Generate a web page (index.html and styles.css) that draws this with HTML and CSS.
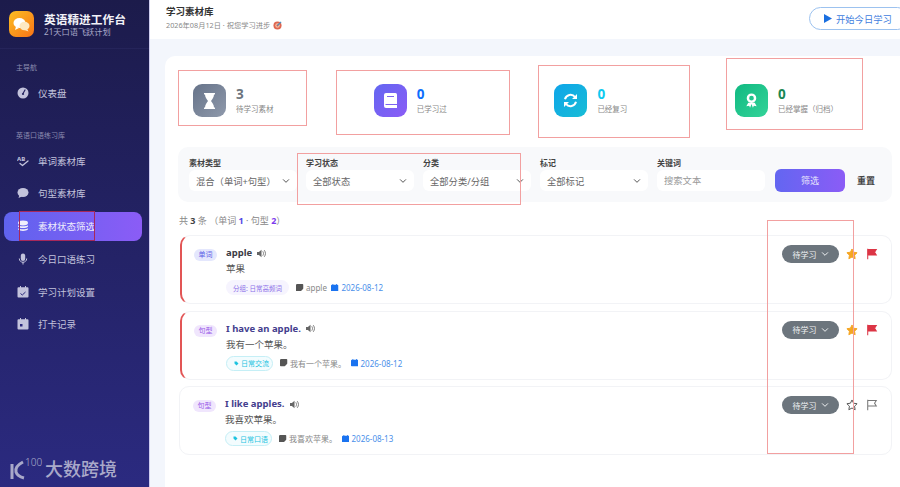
FILE: index.html
```html
<!DOCTYPE html>
<html lang="zh-CN">
<head>
    <meta charset="UTF-8">
    <meta name="viewport" content="width=device-width, initial-scale=1.0">
    <title>学习素材库</title>
    <link rel="stylesheet" href="styles.css">
</head>
<body>
    <svg class="defs" aria-hidden="true">
        <symbol id="i-chevron" viewBox="0 0 12 12"><path d="M2 4l4 4 4-4" fill="none" stroke="currentColor" stroke-width="1.5" stroke-linecap="round" stroke-linejoin="round"/></symbol>
        <symbol id="i-sound" viewBox="0 0 14 12"><path d="M1 4h2.5L7 1v10L3.500 8H1z" fill="currentColor"/><path d="M9 3.500c1 1.500 1 3.500 0 5M11 2c1.800 2.500 1.800 5.500 0 8" fill="none" stroke="currentColor" stroke-width="1.100" stroke-linecap="round"/></symbol>
        <symbol id="i-note" viewBox="0 0 10 10"><path d="M1.500 0h7A1.500 1.500 0 0 1 10 1.500V6L6 10H1.500A1.500 1.500 0 0 1 0 8.500v-7A1.500 1.500 0 0 1 1.500 0z" fill="currentColor"/></symbol>
        <symbol id="i-cal" viewBox="0 0 10 10"><path d="M2 0h1v1h4V0h1v1h.7A1.300 1.300 0 0 1 10 2.300v6.400A1.300 1.300 0 0 1 8.700 10H1.300A1.300 1.300 0 0 1 0 8.700V2.300A1.300 1.300 0 0 1 1.300 1H2z" fill="currentColor"/></symbol>
        <symbol id="i-tag" viewBox="0 0 10 10"><path d="M1 1h4l4 4-4 4-4-4z" fill="currentColor"/></symbol>
        <symbol id="i-star" viewBox="0 0 16 16"><path d="M8 1.300l2.100 4.300 4.700.7-3.400 3.300.8 4.700L8 12l-4.200 2.300.8-4.700L1.200 6.300l4.700-.7z"/></symbol>
        <symbol id="i-flag" viewBox="0 0 14 14"><path d="M2 1v12M2 1.800h10L10 5l2 3.200H2"/></symbol>
    </svg>

    <div class="app">
        <aside class="sidebar">
            <div class="brand">
                <div class="brand-logo">
                    <svg width="17" height="15" viewBox="0 0 17 15"><ellipse cx="6.500" cy="6" rx="6" ry="5" fill="#fff"/><path d="M3 9.500L2 13l4-2z" fill="#fff"/><ellipse cx="11.500" cy="9" rx="5" ry="4.200" fill="#fde9c4"/><path d="M14 12l1.500 2.500-4-1.500z" fill="#fde9c4"/></svg>
                </div>
                <div>
                    <div class="brand-name">英语精进工作台</div>
                    <div class="brand-sub">21天口语飞跃计划</div>
                </div>
            </div>

            <div class="nav-label nav-label-first">主导航</div>
            <a class="nav-item">
                <svg class="nav-icon" viewBox="0 0 12 12"><circle cx="6" cy="6" r="5.500" fill="currentColor"/><path d="M6 6.500L8 3" stroke="#25235f" stroke-width="1.200" stroke-linecap="round"/><circle cx="6" cy="7" r="1.100" fill="#25235f"/></svg>
                仪表盘
            </a>

            <div class="nav-label">英语口语练习库</div>
            <a class="nav-item">
                <svg class="nav-icon" viewBox="0 0 12 12"><text x="0" y="5.500" class="nav-ab">AB</text><path d="M3 8.500l2.500 2L11 6" fill="none" stroke="currentColor" stroke-width="1.300" stroke-linecap="round" stroke-linejoin="round"/></svg>
                单词素材库
            </a>
            <a class="nav-item">
                <svg class="nav-icon" viewBox="0 0 12 12"><ellipse cx="6" cy="5.500" rx="5.500" ry="4.500" fill="currentColor"/><path d="M2.500 8L1.500 11l3.500-1.500z" fill="currentColor"/></svg>
                句型素材库
            </a>
            <a class="nav-item active">
                <svg class="nav-icon" viewBox="0 0 12 12"><ellipse cx="6" cy="3" rx="5" ry="2.400" fill="currentColor"/><path d="M1 5.200c1.500 1.500 8.500 1.500 10 0v1.300c-1.500 2-8.500 2-10 0zM1 8.200c1.500 1.500 8.500 1.500 10 0v1c-1.500 2.300-8.500 2.300-10 0z" fill="currentColor"/></svg>
                素材状态筛选
            </a>
            <a class="nav-item">
                <svg class="nav-icon" viewBox="0 0 12 12"><rect x="3.800" y="0.500" width="4.400" height="7.500" rx="2.200" fill="currentColor"/><path d="M2.300 5.500c0 5 7.400 5 7.400 0M6 9v2.500" fill="none" stroke="currentColor" stroke-width="1"/></svg>
                今日口语练习
            </a>
            <a class="nav-item">
                <svg class="nav-icon" viewBox="0 0 12 12"><path d="M3 0h1v1.200h4V0h1v1.200h1.500A1 1 0 0 1 11.500 2.200v8.300a1 1 0 0 1-1 1h-9a1 1 0 0 1-1-1V2.200a1 1 0 0 1 1-1H3z" fill="currentColor"/><path d="M3.500 7.500l1.800 1.500 3.200-3" fill="none" stroke="#29277a" stroke-width="1"/></svg>
                学习计划设置
            </a>
            <a class="nav-item">
                <svg class="nav-icon" viewBox="0 0 12 12"><path d="M3 0h1v1.200h4V0h1v1.200h1.500A1 1 0 0 1 11.500 2.200v8.300a1 1 0 0 1-1 1h-9a1 1 0 0 1-1-1V2.200a1 1 0 0 1 1-1H3z" fill="currentColor"/><rect x="3" y="6" width="2.500" height="2.500" fill="#2a287c"/></svg>
                打卡记录
            </a>

            <!-- 水印 -->
            <div class="watermark">
                <svg width="16" height="21" viewBox="0 0 16 21"><path d="M3 5v15M14 3C8 6 6 9 7 13c1 3 4 5 8 6" fill="none" stroke="currentColor" stroke-width="3"/></svg>
                <span class="watermark-num">100</span>
                <span class="watermark-name">大数跨境</span>
            </div>
        </aside>

        <main class="main">
            <header class="topbar">
                <div>
                    <h1>学习素材库</h1>
                    <p>2026年08月12日 · 祝您学习进步
                        <svg class="target" viewBox="0 0 10 10"><circle cx="5" cy="5" r="4.500" fill="#e0664f"/><circle cx="5" cy="5" r="2.500" fill="#f2c1a8"/><circle cx="5" cy="5" r="1.100" fill="#d9503c"/><path d="M5 5l4-4" stroke="#4a90c2" stroke-width="1.200"/></svg>
                    </p>
                </div>
                <button class="start-btn" type="button">
                    <svg width="8" height="9" viewBox="0 0 8 9"><path d="M0 0l8 4.500L0 9z" fill="#1a6fe0"/></svg>
                    开始今日学习
                </button>
            </header>

            <section class="panel">
                <div class="stats">
                    <div class="stat">
                        <div class="stat-icon bg-gray">
                            <svg width="13" height="16" viewBox="0 0 13 16"><path d="M1 0h11v1.500h-1c0 3-2 4.700-3 6.500 1 1.800 3 3.500 3 6.500h1V16H1v-1.500h1C2 11.500 4 9.800 5 8 4 6.200 2 4.500 2 1.500H1z" fill="#fff"/></svg>
                        </div>
                        <div><div class="stat-num num-gray">3</div><div class="stat-label">待学习素材</div></div>
                    </div>
                    <div class="stat">
                        <div class="stat-icon bg-purple">
                            <svg width="13" height="15" viewBox="0 0 13 15"><path d="M2 0h9.500A1.500 1.500 0 0 1 13 1.500V15H2a2 2 0 0 1-2-2V2a2 2 0 0 1 2-2z" fill="#fff"/><path d="M3 3.500h7M1.500 11.500H13" stroke="#7c63f0" stroke-width="1.200"/></svg>
                        </div>
                        <div><div class="stat-num num-blue">0</div><div class="stat-label">已学习过</div></div>
                    </div>
                    <div class="stat">
                        <div class="stat-icon bg-cyan">
                            <svg width="15" height="15" viewBox="0 0 15 15"><path d="M2 6.200A5.700 5.700 0 0 1 12 4" fill="none" stroke="#fff" stroke-width="2"/><path d="M14 1v5h-5zM1 14V9h5z" fill="#fff"/><path d="M13 8.800A5.700 5.700 0 0 1 3 11" fill="none" stroke="#fff" stroke-width="2"/></svg>
                        </div>
                        <div><div class="stat-num num-cyan">0</div><div class="stat-label">已经复习</div></div>
                    </div>
                    <div class="stat">
                        <div class="stat-icon bg-green">
                            <svg width="13" height="15" viewBox="0 0 13 16"><circle cx="6.500" cy="5.500" r="3.800" fill="none" stroke="#fff" stroke-width="2.600"/><path d="M3 10.500L1 14l3-.3 1 2 1.500-4 1.500 4 1-2 3 .3-2-3.500z" fill="#fff"/></svg>
                        </div>
                        <div><div class="stat-num num-green">0</div><div class="stat-label">已经掌握（归档）</div></div>
                    </div>
                </div>

                <form class="filters">
                    <div class="field">
                        <label>素材类型</label>
                        <div class="select">混合（单词+句型）<svg class="chev"><use href="#i-chevron"/></svg></div>
                    </div>
                    <div class="field">
                        <label>学习状态</label>
                        <div class="select">全部状态<svg class="chev"><use href="#i-chevron"/></svg></div>
                    </div>
                    <div class="field">
                        <label>分类</label>
                        <div class="select">全部分类/分组<svg class="chev"><use href="#i-chevron"/></svg></div>
                    </div>
                    <div class="field">
                        <label>标记</label>
                        <div class="select">全部标记<svg class="chev"><use href="#i-chevron"/></svg></div>
                    </div>
                    <div class="field">
                        <label>关键词</label>
                        <input class="select" type="text" placeholder="搜索文本">
                    </div>
                    <button class="filter-btn" type="button">筛选</button>
                    <button class="reset-btn" type="button">重置</button>
                </form>

                <div class="count">共 <b>3</b> 条 （单词 <b class="c-word">1</b> · 句型 <b class="c-sent">2</b>）</div>

                <div class="card marked">
                    <span class="badge badge-word">单词</span>
                    <div class="card-body">
                        <div class="card-title">apple <svg class="sound"><use href="#i-sound"/></svg></div>
                        <div class="card-trans">苹果</div>
                        <div class="card-meta">
                            <span class="pill pill-group">分组: 日常高频词</span>
                            <span class="meta"><svg class="meta-icon"><use href="#i-note"/></svg>apple</span>
                            <span class="meta date"><svg class="meta-icon"><use href="#i-cal"/></svg>2026-08-12</span>
                        </div>
                    </div>
                    <div class="card-actions">
                        <span class="status">待学习<svg class="chev"><use href="#i-chevron"/></svg></span>
                        <svg class="star on"><use href="#i-star"/></svg>
                        <svg class="flag on"><use href="#i-flag"/></svg>
                    </div>
                </div>

                <div class="card marked">
                    <span class="badge badge-sent">句型</span>
                    <div class="card-body">
                        <div class="card-title title-sent">I have an apple. <svg class="sound"><use href="#i-sound"/></svg></div>
                        <div class="card-trans">我有一个苹果。</div>
                        <div class="card-meta">
                            <span class="pill pill-cat"><svg class="tag-icon"><use href="#i-tag"/></svg>日常交流</span>
                            <span class="meta"><svg class="meta-icon"><use href="#i-note"/></svg>我有一个苹果。</span>
                            <span class="meta date"><svg class="meta-icon"><use href="#i-cal"/></svg>2026-08-12</span>
                        </div>
                    </div>
                    <div class="card-actions">
                        <span class="status">待学习<svg class="chev"><use href="#i-chevron"/></svg></span>
                        <svg class="star on"><use href="#i-star"/></svg>
                        <svg class="flag on"><use href="#i-flag"/></svg>
                    </div>
                </div>

                <div class="card">
                    <span class="badge badge-sent">句型</span>
                    <div class="card-body">
                        <div class="card-title title-sent">I like apples. <svg class="sound"><use href="#i-sound"/></svg></div>
                        <div class="card-trans">我喜欢苹果。</div>
                        <div class="card-meta">
                            <span class="pill pill-cat"><svg class="tag-icon"><use href="#i-tag"/></svg>日常口语</span>
                            <span class="meta"><svg class="meta-icon"><use href="#i-note"/></svg>我喜欢苹果。</span>
                            <span class="meta date"><svg class="meta-icon"><use href="#i-cal"/></svg>2026-08-13</span>
                        </div>
                    </div>
                    <div class="card-actions">
                        <span class="status">待学习<svg class="chev"><use href="#i-chevron"/></svg></span>
                        <svg class="star"><use href="#i-star"/></svg>
                        <svg class="flag"><use href="#i-flag"/></svg>
                    </div>
                </div>
            </section>
        </main>
    </div>

    <!-- 红色标注框 -->
    <div class="mark mark-nav"></div>
    <div class="mark mark-s1"></div>
    <div class="mark mark-s2"></div>
    <div class="mark mark-s3"></div>
    <div class="mark mark-s4"></div>
    <div class="mark mark-filter"></div>
    <div class="mark mark-cards"></div>
</body>
</html>
```

FILE: styles.css
```css
* {
    margin: 0;
    padding: 0;
    box-sizing: border-box;
}

body {
    font-family: "Noto Sans", "Noto Sans CJK SC", sans-serif;
    width: 900px;
    height: 487px;
    overflow: hidden;
    position: relative;
    background: #fff;
}

.defs {
    display: none;
}

.app {
    display: flex;
    height: 487px;
}

/* 侧边栏 */
.sidebar {
    position: relative;
    width: 150px;
    flex-shrink: 0;
    color: #c3c3dc;
    background: linear-gradient(180deg, #1c1b4b 0%, #2b2a80 100%);
    border-right: 1px solid #cfcdf0;
}

.brand {
    display: flex;
    align-items: center;
    gap: 10px;
    height: 49px;
    padding: 0 9px;
    border-bottom: 1px solid #25245a;
}

.brand-logo {
    width: 25px;
    height: 26px;
    border-radius: 7px;
    background: linear-gradient(135deg, #fbbf24, #f97316);
    display: flex;
    align-items: center;
    justify-content: center;
    flex-shrink: 0;
}

.brand-name {
    font-size: 11.700px;
    font-weight: 700;
    line-height: 14px;
    color: #f2f2f8;
    white-space: nowrap;
}

.brand-sub {
    font-size: 8.200px;
    line-height: 11px;
    color: #a8a8c8;
    white-space: nowrap;
}

.nav-label {
    font-size: 7px;
    line-height: 10px;
    color: #8d8db0;
    padding-left: 16px;
    margin-top: 24px;
    margin-bottom: 5px;
}

.nav-label-first {
    margin-top: 14px;
}

.nav-item {
    display: flex;
    align-items: center;
    gap: 9px;
    height: 29px;
    margin: 0 7px 3.800px 4px;
    padding-left: 13px;
    border-radius: 8px;
    font-size: 9.500px;
    white-space: nowrap;
}

.nav-item.active {
    color: #f0eefc;
    background: linear-gradient(90deg, #5f63ee, #8b5cf6);
}

.nav-icon {
    width: 12px;
    height: 12px;
    flex-shrink: 0;
}

.nav-ab {
    font-size: 6px;
    font-weight: 700;
    fill: currentColor;
}

.watermark {
    position: absolute;
    left: 9px;
    bottom: 6px;
    display: flex;
    align-items: center;
    color: #a9a9c9;
}

.watermark-num {
    align-self: flex-start;
    font-size: 10px;
    font-weight: 300;
    line-height: 10px;
    width: 20px;
    margin-top: 0;
}

.watermark-name {
    font-size: 18px;
    line-height: 24px;
    font-weight: 500;
    white-space: nowrap;
}

/* 主区域 */
.main {
    flex: 1;
    min-width: 0;
    background: #f3f6fc;
}

.topbar {
    height: 39px;
    background: #fff;
    display: flex;
    justify-content: space-between;
    padding: 5px 0 0 16px;
}

.topbar h1 {
    font-size: 9.500px;
    line-height: 13px;
    font-weight: 700;
    color: #333;
}

.topbar p {
    display: flex;
    align-items: center;
    gap: 3px;
    margin-top: 1px;
    font-size: 7.250px;
    line-height: 13px;
    color: #888;
}

.target {
    width: 9px;
    height: 9px;
}

.start-btn {
    display: flex;
    align-items: center;
    gap: 4px;
    width: 100px;
    height: 23px;
    margin-top: 2px;
    margin-right: -9px;
    padding-left: 14px;
    border: 1px solid #9cc2ef;
    border-radius: 12px;
    background: #fff;
    color: #3f80de;
    font-family: inherit;
    font-size: 9.300px;
}

.panel {
    height: 448px;
    margin: 17px 0 0 15px;
    padding: 28px 8px 0 14px;
    border-radius: 10px 0 0 0;
    background: #fff;
}

.stats {
    display: grid;
    grid-template-columns: repeat(4, 173px);
    gap: 7.700px;
    height: 33px;
    margin-bottom: 30px;
}

.stat {
    display: flex;
    align-items: center;
    gap: 10px;
    padding-left: 14px;
}

.stat-icon {
    width: 33px;
    height: 33px;
    border-radius: 9px;
    display: flex;
    align-items: center;
    justify-content: center;
    flex-shrink: 0;
}

.bg-gray { background: linear-gradient(135deg, #667389, #8f99ab); }
.bg-purple { background: linear-gradient(135deg, #6366f1, #8b5cf6); }
.bg-cyan { background: linear-gradient(135deg, #0ea5e9, #18bdd6); }
.bg-green { background: linear-gradient(135deg, #10b981, #34d399); }

.stat-num {
    font-size: 13.500px;
    font-weight: 700;
    line-height: 16px;
}

.num-gray { color: #6c757d; }
.num-blue { color: #0d6efd; }
.num-cyan { color: #0dcaf0; }
.num-green { color: #198754; }

.stat-label {
    margin-top: 2px;
    font-size: 7.500px;
    line-height: 11px;
    color: #888;
    white-space: nowrap;
}

/* 筛选 */
.filters {
    display: flex;
    align-items: flex-end;
    gap: 9px;
    height: 55px;
    padding: 0 0 11px 11px;
    margin-left: -1px;
    border-radius: 10px;
    background: #f8f9fb;
}

.field {
    width: 108px;
}

.field label {
    display: block;
    font-size: 8px;
    font-weight: 700;
    line-height: 11px;
    margin-bottom: 2px;
    color: #444;
}

.select {
    display: flex;
    align-items: center;
    justify-content: space-between;
    width: 108px;
    height: 21px;
    padding: 0 7px 0 7px;
    border: none;
    border-radius: 6px;
    background: #fff;
    font-family: inherit;
    font-size: 9.300px;
    color: #666;
    white-space: nowrap;
}

.select::placeholder {
    color: #999;
}

.chev {
    width: 8px;
    height: 8px;
    flex-shrink: 0;
    color: #555;
}

.filter-btn {
    width: 70px;
    height: 23px;
    margin-left: 1px;
    margin-bottom: -1px;
    border: none;
    border-radius: 6px;
    background: linear-gradient(90deg, #6366f1, #8b5cf6);
    color: #e9e6fc;
    font-family: inherit;
    font-size: 9px;
}

.reset-btn {
    margin-left: 3px;
    height: 21px;
    border: none;
    background: none;
    color: #444;
    font-family: inherit;
    font-size: 9px;
    font-weight: 700;
}

.count {
    margin-top: 12px;
    margin-bottom: 7px;
    font-size: 9px;
    line-height: 14px;
    color: #888;
}

.count b { color: #444; }
.count .c-word { color: #4f46e5; }
.count .c-sent { color: #7c3aed; }

/* 素材卡片 */
.card {
    display: flex;
    align-items: flex-start;
    height: 69px;
    margin-bottom: 6.500px;
    padding: 9px 13px 0 13px;
    border: 1px solid #f2f3f6;
    border-radius: 10px;
    background: #fff;
}

.card.marked {
    margin-left: 1px;
    padding-left: 12px;
    border-left: 2px solid #e25555;
}

.badge {
    width: 23px;
    height: 12px;
    margin-top: 4px;
    border-radius: 6px;
    font-size: 7px;
    line-height: 12px;
    text-align: center;
    flex-shrink: 0;
}

.badge-word {
    background: #e4e7fd;
    color: #5b5ee6;
}

.badge-sent {
    background: #f0e6fd;
    color: #9a5ce8;
}

.card-body {
    flex: 1;
    margin-left: 9px;
    padding-top: 1px;
}

.card-title {
    display: flex;
    align-items: center;
    gap: 4px;
    font-size: 9.500px;
    font-weight: 700;
    line-height: 14px;
    color: #3d3d46;
}

.title-sent {
    color: #453e8e;
}

.sound {
    width: 11px;
    height: 9px;
    color: #666;
}

.card-trans {
    margin-top: 2px;
    font-size: 9.500px;
    line-height: 14px;
    color: #555;
}

.card-meta {
    display: flex;
    align-items: center;
    height: 15px;
    margin-top: 4px;
    font-size: 8px;
    color: #888;
}

.pill {
    display: flex;
    align-items: center;
    height: 15px;
    border-radius: 8px;
    font-size: 7px;
    white-space: nowrap;
}

.pill-group {
    width: 63px;
    padding-left: 7px;
    background: #f6f4fe;
    color: #8b6fe8;
    font-size: 6.500px;
}

.pill-cat {
    width: 47px;
    gap: 2px;
    padding-left: 7px;
    border: 1px solid #c5eff6;
    background: #f3fcfe;
    color: #1cc3e0;
}

.tag-icon {
    width: 5px;
    height: 5px;
}

.meta {
    display: flex;
    align-items: center;
    gap: 2.500px;
    margin-left: 7px;
    white-space: nowrap;
}

.meta-icon {
    width: 7.500px;
    height: 7.500px;
    color: #555;
}

.date {
    margin-left: 4.500px;
    color: #4a8fea;
}

.date .meta-icon {
    color: #1a73f0;
}

.card-actions {
    display: flex;
    align-items: center;
    flex-shrink: 0;
}

.status {
    display: flex;
    align-items: center;
    justify-content: center;
    gap: 4px;
    width: 57px;
    height: 18px;
    border-radius: 9px;
    background: #6c757d;
    color: #eef0f2;
    font-size: 8px;
}

.status .chev {
    color: #eef0f2;
}

.star {
    width: 12px;
    height: 12px;
    margin-left: 7px;
    fill: none;
    stroke: #555;
    stroke-width: 1.300;
}

.star.on {
    fill: #f5a623;
    stroke: #f5a623;
}

.flag {
    width: 12px;
    height: 12px;
    margin-left: 8px;
    fill: none;
    stroke: #777;
    stroke-width: 1.200;
}

.flag.on {
    fill: #dc3545;
    stroke: #dc3545;
}

/* 标注框 */
.mark {
    position: absolute;
    border: 1px solid #f2a0a0;
}

.mark-nav { left: 19px; top: 211px; width: 76px; height: 30px; border-color: #a8285a; }
.mark-s1 { left: 178px; top: 70px; width: 129px; height: 56px; }
.mark-s2 { left: 336px; top: 70px; width: 174px; height: 65px; }
.mark-s3 { left: 538px; top: 65px; width: 152px; height: 73px; }
.mark-s4 { left: 726px; top: 58px; width: 137px; height: 72px; }
.mark-filter { left: 297px; top: 153px; width: 224px; height: 52px; }
.mark-cards { left: 767px; top: 220px; width: 87px; height: 234px; }
```
